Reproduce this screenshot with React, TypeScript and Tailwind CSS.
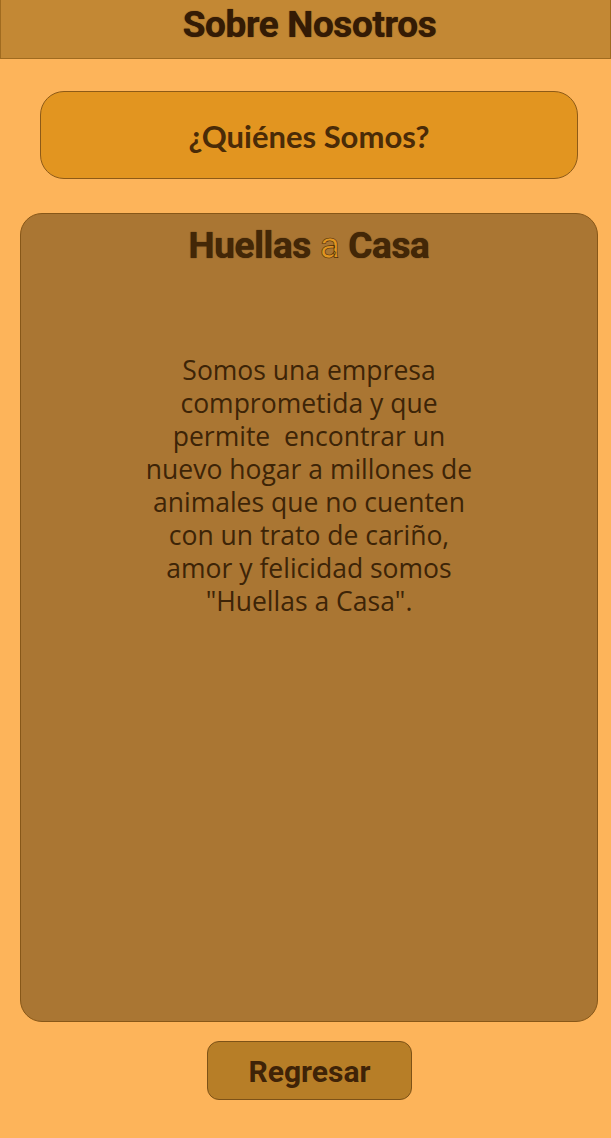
export default function App() {
  return (
    <div className="min-h-screen w-full bg-[#fdb45a] pb-[38px]">
      <header className="flex h-[59px] justify-center border border-t-0 border-[#a06b1f] bg-[#c38834] pl-[8px] pt-[6px]">
        <h1 className="font-['Roboto',sans-serif] text-[37px] font-bold leading-[37px] tracking-[-0.4px] text-[#341b05] [text-shadow:0_0_1px_#341b05]">
          Sobre Nosotros
        </h1>
      </header>

      <section className="ml-[40px] mt-[32px] flex h-[88px] w-[538px] items-center justify-center rounded-[24px] border border-[#8d5a17] bg-[#e29520] pt-[2px]">
        <h2 className="font-['Lato',sans-serif] text-[31px] font-bold text-[#4a2b07]">
          ¿Quiénes Somos?
        </h2>
      </section>

      <section className="ml-[20px] mt-[34px] flex h-[809px] w-[578px] flex-col items-center rounded-[22px] border border-[#875718] bg-[#aa7633]">
        <h2 className="mt-[12px] font-['Roboto',sans-serif] text-[37px] font-bold leading-[40px] tracking-[-0.4px] text-[#432707] [text-shadow:0_0_1px_#2b1703]">
          Huellas{" "}
          <span className="font-normal text-[#e29520] [-webkit-text-stroke:0.6px_#4a2b07] [text-shadow:none]">
            a
          </span>{" "}
          Casa
        </h2>
        <p className="mt-[88px] w-[420px] text-center font-['Open_Sans',sans-serif] text-[26.5px] font-medium leading-[33px] text-[#3d2407]">
          Somos una empresa
          <br />
          comprometida y que
          <br />
          permite&nbsp; encontrar un
          <br />
          nuevo hogar a millones de
          <br />
          animales que no cuenten
          <br />
          con un trato de cariño,
          <br />
          amor y felicidad somos
          <br />
          "Huellas a Casa".
        </p>
      </section>

      <div className="mt-[19px] flex">
        <button className="ml-[207px] flex h-[59px] w-[205px] items-center justify-center rounded-[12px] border border-[#7d5217] bg-[#b77e27] pt-[2px] font-['Roboto',sans-serif] text-[30px] font-bold text-[#3f2307]">
          Regresar
        </button>
      </div>
    </div>
  );
}
